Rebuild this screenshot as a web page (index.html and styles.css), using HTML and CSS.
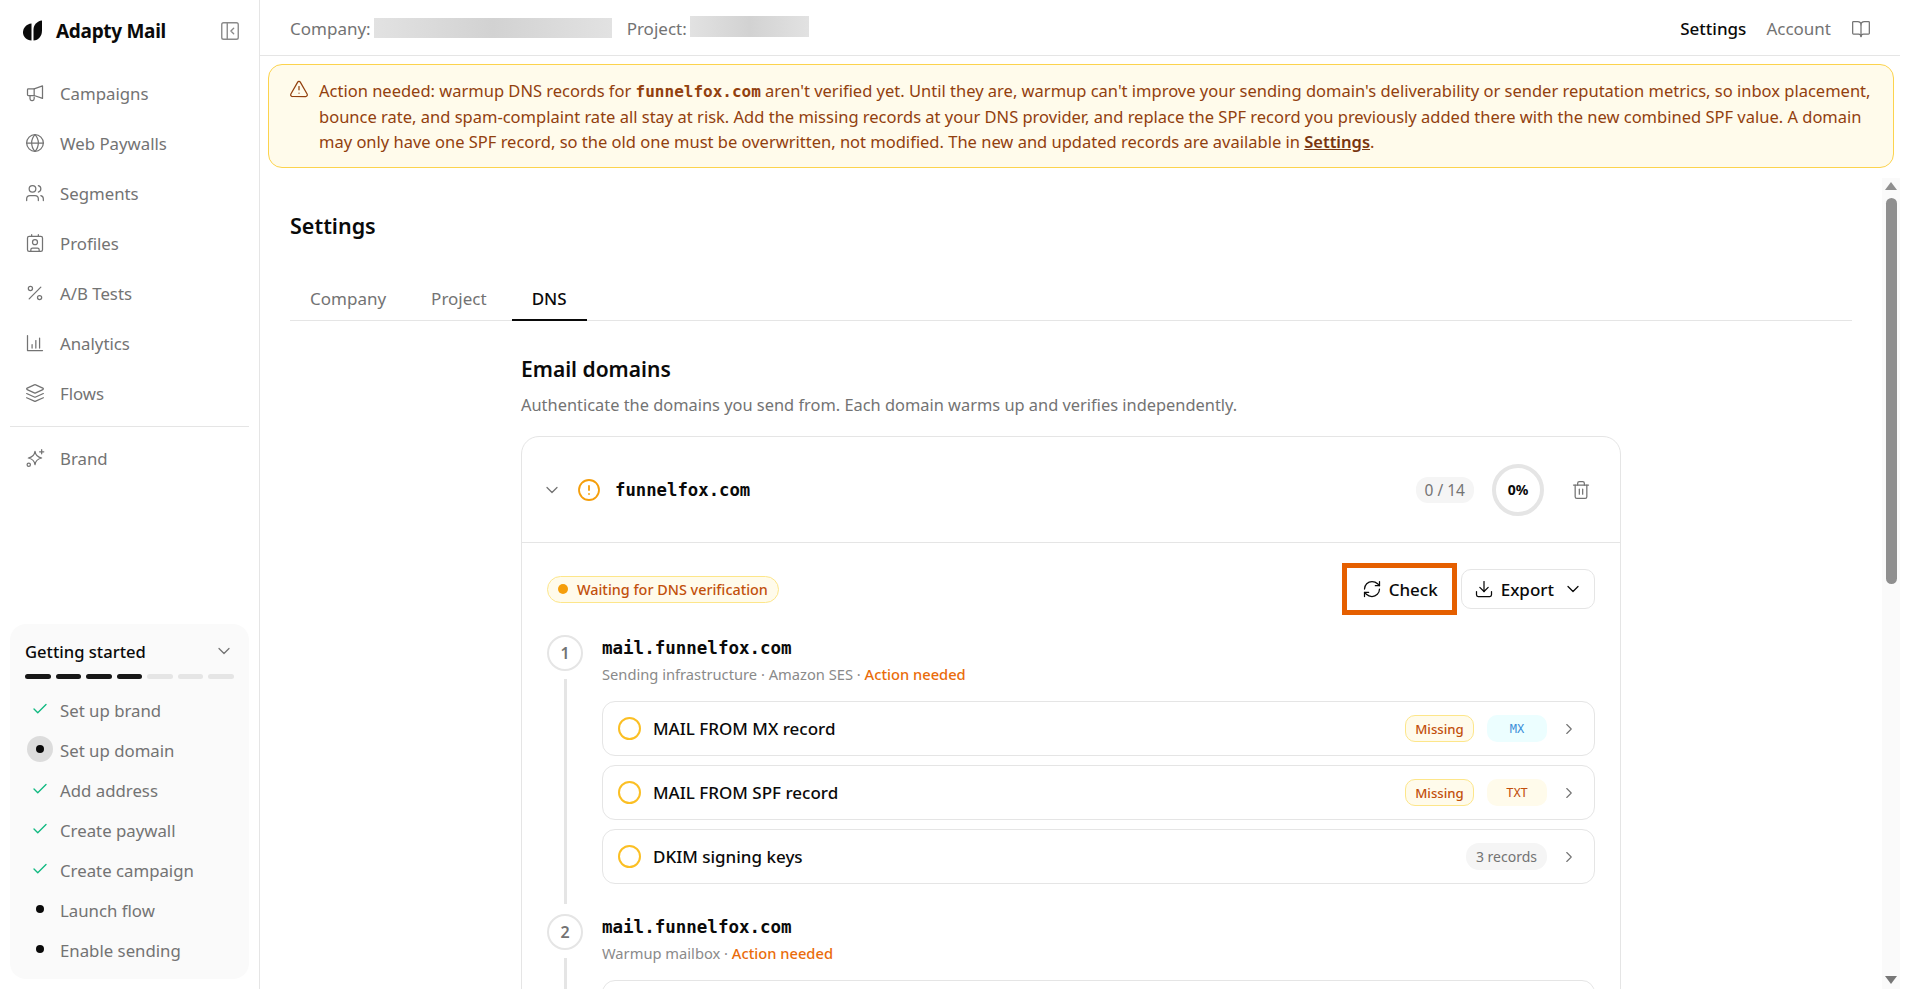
FILE: index.html
```html
<!DOCTYPE html>
<html lang="en">

<head>
  <meta charset="UTF-8">
  <meta name="viewport" content="width=device-width, initial-scale=1.0">
  <title>Adapty Mail</title>
  <link rel="stylesheet" href="styles.css">
</head>

<body>
  <!-- icon sprite -->
  <svg class="sprite" xmlns="http://www.w3.org/2000/svg">
    <symbol id="i-panel" viewBox="0 0 24 24"><rect x="3" y="3" width="18" height="18" rx="2"/><path d="M9 3v18"/><path d="m16 15-3-3 3-3"/></symbol>
    <symbol id="i-megaphone" viewBox="0 0 24 24"><path d="M21 3.500v15L11 15H4a1 1 0 0 1-1-1V8a1 1 0 0 1 1-1h7z"/><path d="M11 7v8"/><path d="M6 15v4a2 2 0 0 0 2 2h1a2 2 0 0 0 2-2v-2"/></symbol>
    <symbol id="i-globe" viewBox="0 0 24 24"><circle cx="12" cy="12" r="10"/><path d="M12 2a14.5 14.5 0 0 0 0 20 14.5 14.5 0 0 0 0-20"/><path d="M2 12h20"/></symbol>
    <symbol id="i-users" viewBox="0 0 24 24"><path d="M16 21v-2a4 4 0 0 0-4-4H6a4 4 0 0 0-4 4v2"/><circle cx="9" cy="7" r="4"/><path d="M22 21v-2a4 4 0 0 0-3-3.87"/><path d="M16 3.13a4 4 0 0 1 0 7.75"/></symbol>
    <symbol id="i-contact" viewBox="0 0 24 24"><path d="M16 2v2"/><path d="M7 22v-2a2 2 0 0 1 2-2h6a2 2 0 0 1 2 2v2"/><path d="M8 2v2"/><circle cx="12" cy="11" r="3"/><rect x="3" y="4" width="18" height="18" rx="2"/></symbol>
    <symbol id="i-percent" viewBox="0 0 24 24"><line x1="19" y1="5" x2="5" y2="19"/><circle cx="6.5" cy="6.5" r="2.5"/><circle cx="17.5" cy="17.5" r="2.5"/></symbol>
    <symbol id="i-chart" viewBox="0 0 24 24"><path d="M3 3v18h18"/><path d="M8.500 18v-4"/><path d="M13 18V9"/><path d="M17.500 18V6"/></symbol>
    <symbol id="i-layers" viewBox="0 0 24 24"><path d="m12.83 2.18a2 2 0 0 0-1.66 0L2.6 6.08a1 1 0 0 0 0 1.83l8.58 3.91a2 2 0 0 0 1.66 0l8.58-3.9a1 1 0 0 0 0-1.83Z"/><path d="m22 17.65-9.17 4.16a2 2 0 0 1-1.66 0L2 17.65"/><path d="m22 12.65-9.17 4.16a2 2 0 0 1-1.66 0L2 12.65"/></symbol>
    <symbol id="i-sparkles" viewBox="0 0 24 24"><path d="M12 4c.6 4 3 7 8 8-5 1-7.400 4-8 8-.6-4-3-7-8-8 5-1 7.400-4 8-8z"/><path d="M20 2v5"/><path d="M17.500 4.500h5"/><circle cx="4.500" cy="20" r="2"/></symbol>
    <symbol id="i-alert" viewBox="0 0 24 24"><path d="m21.730 18-8-14a2 2 0 0 0-3.480 0l-8 14A2 2 0 0 0 4 21h16a2 2 0 0 0 1.730-3"/><path d="M12 9v4"/><path d="M12 17h.01"/></symbol>
    <symbol id="i-book" viewBox="0 0 24 24"><path d="M12 7v14"/><path d="M3 18a1 1 0 0 1-1-1V4a1 1 0 0 1 1-1h5a4 4 0 0 1 4 4 4 4 0 0 1 4-4h5a1 1 0 0 1 1 1v13a1 1 0 0 1-1 1h-6a3 3 0 0 0-3 3 3 3 0 0 0-3-3z"/></symbol>
    <symbol id="i-down" viewBox="0 0 24 24"><path d="m6 9 6 6 6-6"/></symbol>
    <symbol id="i-right" viewBox="0 0 24 24"><path d="m9 18 6-6-6-6"/></symbol>
    <symbol id="i-check" viewBox="0 0 24 24"><path d="M20 6 9 17l-5-5"/></symbol>
    <symbol id="i-warn" viewBox="0 0 24 24"><circle cx="12" cy="12" r="10"/><path d="M12 8v4"/><path d="M12 16h.01"/></symbol>
    <symbol id="i-trash" viewBox="0 0 24 24"><path d="M3 6h18"/><path d="M19 6v14c0 1-1 2-2 2H7c-1 0-2-1-2-2V6"/><path d="M8 6V4c0-1 1-2 2-2h4c1 0 2 1 2 2v2"/><line x1="10" y1="11" x2="10" y2="17"/><line x1="14" y1="11" x2="14" y2="17"/></symbol>
    <symbol id="i-refresh" viewBox="0 0 24 24"><path d="M3 12a9 9 0 0 1 9-9 9.750 9.750 0 0 1 6.740 2.740L21 8"/><path d="M21 3v5h-5"/><path d="M21 12a9 9 0 0 1-9 9 9.750 9.750 0 0 1-6.740-2.740L3 16"/><path d="M8 16H3v5"/></symbol>
    <symbol id="i-download" viewBox="0 0 24 24"><path d="M21 15v4a2 2 0 0 1-2 2H5a2 2 0 0 1-2-2v-4"/><path d="m7 10 5 5 5-5"/><path d="M12 15V3"/></symbol>
  </svg>

  <div class="sidebar">
    <div class="brand-row">
      <svg class="logo" viewBox="0 0 20 22"><path d="M8.500 3.500v17C3.500 20.500 0 16.800 0 12.300 0 7.800 3.500 4 8.500 3.500z"/><path d="M10.500 20.500V9.500C10.500 5 14 1 19 0.500v10c0 5.500-3.500 10-8.500 10z"/></svg>
      <span class="brand-name">Adapty Mail</span>
      <svg class="icon collapse"><use href="#i-panel"/></svg>
    </div>

    <div class="nav">
      <div class="nav-item"><svg class="icon"><use href="#i-megaphone"/></svg>Campaigns</div>
      <div class="nav-item"><svg class="icon"><use href="#i-globe"/></svg>Web Paywalls</div>
      <div class="nav-item"><svg class="icon"><use href="#i-users"/></svg>Segments</div>
      <div class="nav-item"><svg class="icon"><use href="#i-contact"/></svg>Profiles</div>
      <div class="nav-item"><svg class="icon"><use href="#i-percent"/></svg>A/B Tests</div>
      <div class="nav-item"><svg class="icon"><use href="#i-chart"/></svg>Analytics</div>
      <div class="nav-item"><svg class="icon"><use href="#i-layers"/></svg>Flows</div>
      <div class="nav-divider"></div>
      <div class="nav-item"><svg class="icon"><use href="#i-sparkles"/></svg>Brand</div>
    </div>

    <div class="started">
      <div class="started-head">
        <span>Getting started</span>
        <svg class="icon"><use href="#i-down"/></svg>
      </div>
      <div class="progress">
        <span class="done"></span><span class="done"></span><span class="done"></span><span class="done"></span><span></span><span></span><span></span>
      </div>
      <div class="started-item"><svg class="tick"><use href="#i-check"/></svg>Set up brand</div>
      <div class="started-item"><span class="dot current"></span>Set up domain</div>
      <div class="started-item"><svg class="tick"><use href="#i-check"/></svg>Add address</div>
      <div class="started-item"><svg class="tick"><use href="#i-check"/></svg>Create paywall</div>
      <div class="started-item"><svg class="tick"><use href="#i-check"/></svg>Create campaign</div>
      <div class="started-item"><span class="dot"></span>Launch flow</div>
      <div class="started-item"><span class="dot"></span>Enable sending</div>
    </div>
  </div>

  <div class="main">
    <div class="topbar">
      <span class="crumb">Company:</span>
      <span class="redacted company"></span>
      <span class="crumb">Project:</span>
      <span class="redacted project"></span>
      <div class="topbar-right">
        <span class="top-link active">Settings</span>
        <span class="top-link">Account</span>
        <svg class="icon"><use href="#i-book"/></svg>
      </div>
    </div>

    <div class="banner">
      <svg class="icon banner-icon"><use href="#i-alert"/></svg>
      <p>Action needed: warmup DNS records for <code>funnelfox.com</code> aren't verified yet. Until they are, warmup can't improve your sending domain's deliverability or sender reputation metrics, so inbox placement,<br>bounce rate, and spam-complaint rate all stay at risk. Add the missing records at your DNS provider, and replace the SPF record you previously added there with the new combined SPF value. A domain<br>may only have one SPF record, so the old one must be overwritten, not modified. The new and updated records are available in <a href="#">Settings</a>.</p>
    </div>

    <div class="scroll-area">
      <div class="page">
        <h1>Settings</h1>
        <div class="tabs">
          <span class="tab">Company</span>
          <span class="tab">Project</span>
          <span class="tab active">DNS</span>
        </div>

        <div class="domains">
          <h2>Email domains</h2>
          <p class="lead">Authenticate the domains you send from. Each domain warms up and verifies independently.</p>

          <div class="domain-card">
            <div class="domain-head">
              <svg class="icon"><use href="#i-down"/></svg>
              <svg class="warn"><use href="#i-warn"/></svg>
              <span class="domain-name">funnelfox.com</span>
              <span class="count">0 / 14</span>
              <span class="ring">0%</span>
              <svg class="icon trash"><use href="#i-trash"/></svg>
            </div>

            <div class="domain-body">
              <div class="actions">
                <span class="status"><span class="status-dot"></span>Waiting for DNS verification</span>
                <button class="btn btn-check"><svg class="icon"><use href="#i-refresh"/></svg>Check</button>
                <button class="btn"><svg class="icon"><use href="#i-download"/></svg>Export<svg class="icon caret"><use href="#i-down"/></svg></button>
              </div>

              <div class="step">
                <div class="step-rail"><span class="step-num">1</span><span class="step-line"></span></div>
                <div class="step-main">
                  <div class="step-title">mail.funnelfox.com</div>
                  <div class="step-sub">Sending infrastructure · Amazon SES · <span class="needed">Action needed</span></div>
                  <div class="record">
                    <span class="record-circle"></span>
                    <span class="record-name">MAIL FROM MX record</span>
                    <span class="tag missing">Missing</span>
                    <span class="tag type mx">MX</span>
                    <svg class="icon"><use href="#i-right"/></svg>
                  </div>
                  <div class="record">
                    <span class="record-circle"></span>
                    <span class="record-name">MAIL FROM SPF record</span>
                    <span class="tag missing">Missing</span>
                    <span class="tag type txt">TXT</span>
                    <svg class="icon"><use href="#i-right"/></svg>
                  </div>
                  <div class="record">
                    <span class="record-circle"></span>
                    <span class="record-name">DKIM signing keys</span>
                    <span class="tag many">3 records</span>
                    <svg class="icon"><use href="#i-right"/></svg>
                  </div>
                </div>
              </div>

              <div class="step">
                <div class="step-rail"><span class="step-num">2</span><span class="step-line"></span></div>
                <div class="step-main">
                  <div class="step-title">mail.funnelfox.com</div>
                  <div class="step-sub">Warmup mailbox · <span class="needed">Action needed</span></div>
                  <div class="record"></div>
                </div>
              </div>
            </div>
          </div>
        </div>
      </div>

      <div class="scrollbar">
        <span class="arrow up"></span>
        <span class="thumb"></span>
        <span class="arrow down"></span>
      </div>
    </div>
  </div>
</body>

</html>
```

FILE: styles.css
```css
* {
  box-sizing: border-box;
}

html,
body {
  height: 100%;
}

body {
  font-family: "Noto Sans", Arial, sans-serif;
  font-size: 17px;
  color: #0a0a0a;
  background-color: #fff;
  margin: 0;
  display: flex;
  height: 100vh;
  overflow: hidden;
}

.sprite {
  display: none;
}

.icon {
  width: 20px;
  height: 20px;
  flex-shrink: 0;
  fill: none;
  stroke: #737373;
  stroke-width: 1.5;
  stroke-linecap: round;
  stroke-linejoin: round;
}

/* sidebar */
.sidebar {
  width: 260px;
  flex-shrink: 0;
  border-right: 1px solid #e5e5e5;
  display: flex;
  flex-direction: column;
  padding: 0 10px 10px;
}

.brand-row {
  height: 61px;
  display: flex;
  align-items: center;
  padding: 0 8px 0 13px;
}

.logo {
  width: 20px;
  height: 22px;
  fill: #0a0a0a;
  margin-right: 13px;
}

.brand-name {
  font-size: 19px;
  font-weight: 700;
  flex: 1;
  letter-spacing: -0.3px;
}

.collapse {
  width: 22px;
  height: 22px;
  stroke: #8a8a8a;
}

.nav {
  margin-top: 7px;
}

.nav-item {
  height: 50px;
  display: flex;
  align-items: center;
  gap: 15px;
  padding-left: 15px;
  color: #737373;
  font-size: 16.8px;
}

.nav-divider {
  height: 1px;
  background-color: #e5e5e5;
  margin: 8px 0 6px;
}

.started {
  margin-top: auto;
  background-color: #fafafa;
  border-radius: 16px;
  padding: 13px 15px 9px;
}

.started-head {
  display: flex;
  justify-content: space-between;
  align-items: center;
  height: 28px;
  font-size: 16.6px;
  font-weight: 500;
}

.progress {
  display: flex;
  gap: 5px;
  margin: 9px 0 11px;
}

.progress span {
  flex: 1;
  height: 5px;
  border-radius: 3px;
  background-color: #e5e5e5;
}

.progress .done {
  background-color: #171717;
}

.started-item {
  height: 40px;
  display: flex;
  align-items: center;
  gap: 11px;
  padding-left: 6px;
  color: #737373;
  font-size: 16.8px;
}

.tick {
  width: 18px;
  height: 18px;
  flex-shrink: 0;
  fill: none;
  stroke: #10b981;
  stroke-width: 1.8;
  stroke-linecap: round;
  stroke-linejoin: round;
  margin-top: -3px;
}

.dot {
  width: 18px;
  height: 18px;
  flex-shrink: 0;
  display: flex;
  align-items: center;
  justify-content: center;
  margin-top: -3px;
}

.dot::before {
  content: "";
  width: 8px;
  height: 8px;
  border-radius: 50%;
  background-color: #0a0a0a;
}

.dot.current {
  width: 26px;
  height: 26px;
  margin: -3px -4px 0;
  border-radius: 50%;
  background-color: #dcdcdc;
}

/* main column */
.main {
  flex: 1;
  min-width: 0;
  margin-right: 20px;
  display: flex;
  flex-direction: column;
}

.topbar {
  height: 56px;
  flex-shrink: 0;
  border-bottom: 1px solid #e5e5e5;
  display: flex;
  align-items: center;
  padding: 2px 29px 0 30px;
}

.crumb {
  color: #737373;
}

.redacted {
  height: 20px;
  background: linear-gradient(90deg, #e2e2e2, #d2d2d2 50%, #e2e2e2);
}

.redacted.company {
  width: 238px;
  margin: -2px 15px 0 3px;
}

.redacted.project {
  width: 119px;
  height: 21px;
  margin: -5px 0 0 3px;
}

.topbar-right {
  margin-left: auto;
  display: flex;
  align-items: center;
  gap: 20px;
}

.top-link {
  color: #737373;
}

.top-link.active {
  color: #0a0a0a;
  font-weight: 500;
}

.banner {
  margin: 8px 6px 0 8px;
  height: 104px;
  flex-shrink: 0;
  background-color: #fffbeb;
  border: 1px solid #fcd34d;
  border-radius: 14px;
  color: #92400e;
  display: flex;
  padding: 13px 20px 0 20px;
  gap: 10px;
}

.banner p {
  margin: 0;
  font-size: 16.5px;
  line-height: 25px;
  white-space: nowrap;
}

.banner code {
  font-family: "DejaVu Sans Mono", monospace;
  font-size: 16px;
  font-weight: 700;
}

.banner a {
  color: #78350f;
  font-weight: 600;
}

.banner-icon {
  stroke: #92400e;
  margin-top: 1px;
}

.scroll-area {
  flex: 1;
  min-height: 0;
  display: flex;
  overflow: hidden;
}

.page {
  flex: 1;
  min-width: 0;
  padding: 0 30px 0 30px;
}

h1 {
  font-size: 21.5px;
  font-weight: 600;
  line-height: 30px;
  margin: 43px 0 0;
}

.tabs {
  display: flex;
  gap: 5px;
  margin-top: 30px;
  height: 50px;
  border-bottom: 1px solid #e5e5e5;
}

.tab {
  padding: 0 20px;
  height: 50px;
  line-height: 56px;
  color: #737373;
}

.tab.active {
  color: #0a0a0a;
  font-weight: 500;
  border-bottom: 2px solid #0a0a0a;
}

.domains {
  width: 1100px;
  margin: 0 auto;
}

h2 {
  font-size: 21px;
  font-weight: 600;
  line-height: 30px;
  margin: 33px 0 0;
}

.lead {
  color: #737373;
  font-size: 16.4px;
  margin: 8px 0 0;
  line-height: 26px;
}

.domain-card {
  margin-top: 18px;
  border: 1px solid #e5e5e5;
  border-radius: 18px 18px 0 0;
}

.domain-head {
  height: 106px;
  border-bottom: 1px solid #e5e5e5;
  display: flex;
  align-items: center;
  padding: 0 29px 0 20px;
}

.warn {
  width: 24px;
  height: 24px;
  fill: none;
  stroke: #f59e0b;
  stroke-width: 1.8;
  stroke-linecap: round;
  margin: 0 14px 0 15px;
}

.domain-name {
  font-family: "DejaVu Sans Mono", monospace;
  font-size: 17.3px;
  font-weight: 700;
  flex: 1;
}

.count {
  background-color: #f5f5f5;
  color: #737373;
  font-size: 15.5px;
  padding: 2px 9px;
  border-radius: 12px;
  margin-right: 18px;
}

.ring {
  width: 52px;
  height: 52px;
  border: 4px solid #e5e5e5;
  border-radius: 50%;
  display: flex;
  align-items: center;
  justify-content: center;
  font-size: 14px;
  font-weight: 700;
  margin-right: 27px;
}

.domain-body {
  padding: 26px 25px 0;
}

.actions {
  display: flex;
  align-items: center;
  height: 40px;
  margin-bottom: 26px;
}

.status {
  display: flex;
  align-items: center;
  gap: 9px;
  height: 27px;
  padding: 0 10px;
  background-color: #fffbeb;
  border: 1px solid #fde68a;
  border-radius: 14px;
  color: #c2500c;
  font-size: 14.4px;
  font-weight: 500;
  margin-right: auto;
}

.status-dot {
  width: 10px;
  height: 10px;
  border-radius: 50%;
  background-color: #f59e0b;
}

.btn {
  font-family: inherit;
  font-size: 17px;
  font-weight: 500;
  color: #0a0a0a;
  height: 40px;
  background-color: #fff;
  border: 1px solid #e5e5e5;
  border-radius: 10px;
  padding: 0 11px 0 12px;
  display: flex;
  align-items: center;
  gap: 7px;
  margin-left: 4px;
}

.btn .icon {
  stroke: #0a0a0a;
}

.btn .caret {
  margin-left: 2px;
}

.btn-check {
  border: 5px solid #e55f00;
  border-radius: 0;
  height: 52px;
  width: 115px;
  justify-content: center;
}

.step {
  display: flex;
  gap: 19px;
}

.step-rail {
  width: 36px;
  flex-shrink: 0;
  display: flex;
  flex-direction: column;
  align-items: center;
}

.step-num {
  width: 36px;
  height: 36px;
  flex-shrink: 0;
  border: 2px solid #e5e5e5;
  border-radius: 50%;
  display: flex;
  align-items: center;
  justify-content: center;
  color: #737373;
  font-weight: 600;
  font-size: 16px;
}

.step-line {
  flex: 1;
  width: 3px;
  background-color: #e5e5e5;
  margin: 8px 0 10px;
}

.step-main {
  flex: 1;
  min-width: 0;
  padding: 1px 0 21px;
}

.step-title {
  font-family: "DejaVu Sans Mono", monospace;
  font-size: 17.5px;
  font-weight: 700;
  line-height: 24px;
}

.step-sub {
  color: #8a8a8a;
  font-size: 14.7px;
  line-height: 24px;
  margin: 2px 0 15px;
}

.needed {
  color: #ea6c0a;
  font-weight: 500;
}

.record {
  min-height: 55px;
  border: 1px solid #e5e5e5;
  border-radius: 13px;
  display: flex;
  align-items: center;
  padding: 0 16px 0 15px;
  margin-bottom: 9px;
  gap: 13px;
}

.record-circle {
  width: 23px;
  height: 23px;
  border: 2px solid #fbbf24;
  border-radius: 50%;
  flex-shrink: 0;
  margin-right: -1px;
}

.record-name {
  font-weight: 500;
  margin-right: auto;
}

.tag {
  height: 27px;
  border-radius: 10px;
  font-size: 14px;
  display: flex;
  align-items: center;
  justify-content: center;
}

.tag.missing {
  width: 69px;
  background-color: #fffbeb;
  border: 1px solid #fde68a;
  color: #c2500c;
  font-size: 13.2px;
  font-weight: 500;
}

.tag.type {
  width: 60px;
  font-family: "DejaVu Sans Mono", monospace;
  font-size: 12px;
}

.tag.mx {
  background-color: #ecfeff;
  color: #3b8fd9;
}

.tag.txt {
  background-color: #fffbeb;
  color: #c2500c;
}

.tag.many {
  background-color: #f5f5f5;
  color: #737373;
  padding: 0 10px;
  border-radius: 13px;
}

.record .icon {
  width: 18px;
  height: 18px;
}

/* scrollbar, drawn to look like the browser one */
.scrollbar {
  width: 18px;
  flex-shrink: 0;
  background-color: #fafafa;
  margin-top: 10px;
  display: flex;
  flex-direction: column;
  align-items: center;
  padding: 4px 0 5px;
}

.thumb {
  width: 11px;
  height: 386px;
  border-radius: 6px;
  background-color: #8f8f8f;
  margin-top: 8px;
}

.arrow {
  width: 0;
  height: 0;
  border-left: 6px solid transparent;
  border-right: 6px solid transparent;
}

.arrow.up {
  border-bottom: 8px solid #8f8f8f;
}

.arrow.down {
  border-top: 8px solid #777;
  margin-top: auto;
}
```
